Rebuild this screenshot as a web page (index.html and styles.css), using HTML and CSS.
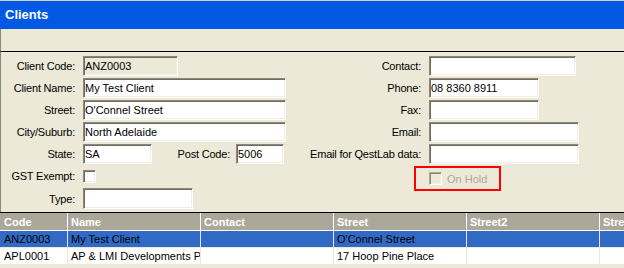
FILE: index.html
```html
<!DOCTYPE html>
<html lang="en">
<head>
    <meta charset="UTF-8">
    <title>Clients</title>
    <link rel="stylesheet" href="styles.css">
</head>
<body>

<div class="titlebar">Clients</div>
<div class="toolbar"></div>

<div class="form">
    <div class="col col-left">
        <div class="row">
            <label>Client Code:</label>
            <input type="text" class="field readonly w-code" value="ANZ0003" readonly>
        </div>
        <div class="row">
            <label>Client Name:</label>
            <input type="text" class="field w-wide" value="My Test Client">
        </div>
        <div class="row">
            <label>Street:</label>
            <input type="text" class="field w-wide" value="O'Connel Street">
        </div>
        <div class="row">
            <label>City/Suburb:</label>
            <input type="text" class="field w-wide" value="North Adelaide">
        </div>
        <div class="row">
            <label>State:</label>
            <input type="text" class="field w-state" value="SA">
            <span class="inline-label">Post Code:</span>
            <input type="text" class="field w-post" value="5006">
        </div>
        <div class="row row-check">
            <label>GST Exempt:</label>
            <span class="checkbox"></span>
        </div>
        <div class="row row-type">
            <label>Type:</label>
            <input type="text" class="field w-type">
        </div>
    </div>

    <div class="col col-right">
        <div class="row">
            <label>Contact:</label>
            <input type="text" class="field w-contact">
        </div>
        <div class="row">
            <label>Phone:</label>
            <input type="text" class="field w-phone" value="08 8360 8911">
        </div>
        <div class="row">
            <label>Fax:</label>
            <input type="text" class="field w-phone">
        </div>
        <div class="row">
            <label>Email:</label>
            <input type="text" class="field w-email">
        </div>
        <div class="row">
            <label>Email for QestLab data:</label>
            <input type="text" class="field w-email">
        </div>
        <div class="onhold">
            <span class="checkbox disabled"></span>
            <span class="onhold-text">On Hold</span>
        </div>
    </div>
</div>

<table class="grid">
    <colgroup>
        <col class="c-code">
        <col class="c-std">
        <col class="c-std">
        <col class="c-std">
        <col class="c-std">
        <col class="c-std">
    </colgroup>
    <thead>
        <tr>
            <th>Code</th>
            <th>Name</th>
            <th>Contact</th>
            <th>Street</th>
            <th>Street2</th>
            <th>Street3</th>
        </tr>
    </thead>
    <tbody>
        <tr class="selected">
            <td>ANZ0003</td>
            <td>My Test Client</td>
            <td></td>
            <td>O'Connel Street</td>
            <td></td>
            <td></td>
        </tr>
        <tr>
            <td>APL0001</td>
            <td>AP &amp; LMI Developments Pty Ltd</td>
            <td></td>
            <td>17 Hoop Pine Place</td>
            <td></td>
            <td></td>
        </tr>
    </tbody>
</table>

</body>
</html>
```

FILE: styles.css
```css
body {
    margin: 0;
    padding: 0;
    width: 624px;
    height: 268px;
    overflow: hidden;
    background-color: #ece9d8;
    font-family: 'Liberation Sans', Arial, sans-serif;
    font-size: 11px;
    color: #000;
}

.titlebar {
    height: 28px;
    border-top: 1px solid #d4d0c8;
    background-color: #0058e3;
    color: #fff;
    font-weight: bold;
    font-size: 13px;
    line-height: 28px;
    padding-left: 5px;
}

.toolbar {
    height: 22px;
    border-bottom: 1px solid #000;
    border-left: 1px solid #8a8878;
}

.form {
    display: flex;
    height: 160px;
    box-sizing: border-box;
    padding-top: 4px;
    border-left: 1px solid #8a8878;
}

.col-left {
    width: 289px;
}

.row {
    display: flex;
    align-items: center;
    height: 20px;
    margin-bottom: 2px;
}

.row label,
.inline-label {
    letter-spacing: -0.2px;
}

.row label {
    width: 74px;
    margin-right: 8px;
    text-align: right;
    white-space: nowrap;
}

.col-right .row label {
    width: 131px;
}

.row-check {
    margin-top: 2px;
}

.row-type {
    height: 21px;
}

.inline-label {
    width: 78px;
    margin-right: 6px;
    text-align: right;
}

.field {
    box-sizing: border-box;
    height: 20px;
    margin: 0;
    padding: 0 1px;
    font-family: 'Liberation Sans', Arial, sans-serif;
    font-size: 11px;
    color: #000;
    background-color: #fff;
    border: 1px solid;
    border-color: #8a8878 #fff #fff #8a8878;
    box-shadow: inset 1px 1px 0 #6f6d62, inset -1px -1px 0 #f1efe2;
    outline: none;
}

.row-type .field {
    height: 21px;
}

.field.readonly {
    background-color: #ece9d8;
}

.w-code { width: 95px; }
.w-wide { width: 203px; }
.w-state { width: 69px; }
.w-post { width: 48px; }
.w-type { width: 110px; }
.w-contact { width: 147px; }
.w-phone { width: 110px; }
.w-email { width: 150px; }

.checkbox {
    display: inline-block;
    box-sizing: border-box;
    width: 13px;
    height: 13px;
    background-color: #fff;
    border: 1px solid;
    border-color: #8a8878 #fff #fff #8a8878;
    box-shadow: inset 1px 1px 0 #6f6d62, inset -1px -1px 0 #f1efe2;
}

.checkbox.disabled {
    background-color: #ece9d8;
    border-color: #aca899 #fff #fff #aca899;
    box-shadow: inset 1px 1px 0 #8a8878, inset -1px -1px 0 #f1efe2;
}

.onhold {
    display: flex;
    align-items: center;
    box-sizing: border-box;
    width: 87px;
    height: 25px;
    margin-left: 124px;
    padding-left: 13px;
    border: 2px solid #ff0000;
}

.onhold-text {
    margin-left: 5px;
    color: #aca899;
}

.grid {
    table-layout: fixed;
    width: 733px;
    border-collapse: separate;
    border-spacing: 0;
    border-top: 1px solid #000;
    background-color: #fff;
}

.c-code { width: 68px; }
.c-std { width: 133px; }

.grid th,
.grid td {
    height: 17px;
    padding: 0 3px;
    box-sizing: border-box;
    text-align: left;
    white-space: nowrap;
    overflow: hidden;
    line-height: 16px;
}

.grid th:first-child,
.grid td:first-child {
    padding-left: 4px;
}

.grid th {
    background-color: #aca899;
    color: #fff;
    font-weight: bold;
    border-right: 1px solid #fff;
    border-bottom: 1px solid #fff;
    height: 18px;
}

.grid td {
    border-right: 1px solid #ece9d8;
    border-bottom: 1px solid #ece9d8;
}

.grid tr.selected td {
    background-color: #316ac5;
    border-right-color: #e6e6f0;
}
```
